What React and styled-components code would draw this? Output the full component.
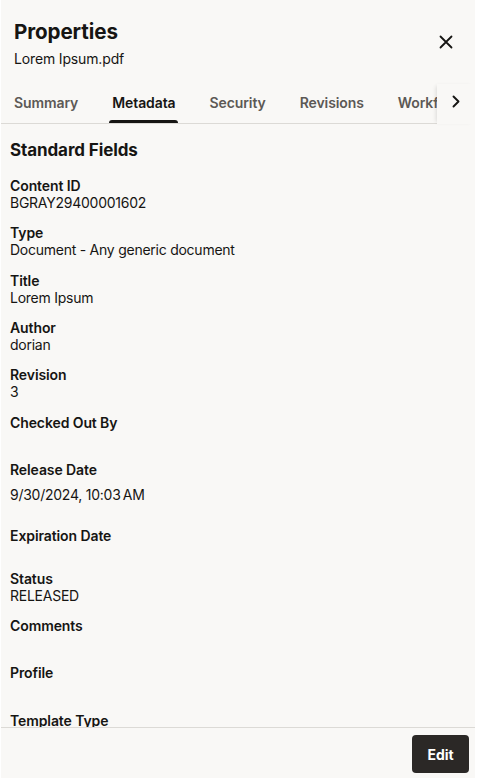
import React from "react";
import styled, { createGlobalStyle } from "styled-components";

const Global = createGlobalStyle`
  html, body { margin: 0; padding: 0; background: #ffffff; }
  body { font-family: Inter, "Noto Sans", "Liberation Sans", sans-serif; color: #161513; }
  * { box-sizing: border-box; }
`;

const Panel = styled.div`
  width: 474px;
  height: 778px;
  margin-left: 1px;
  background: #f9f8f6;
  display: flex;
  flex-direction: column;
  overflow: hidden;
`;

const Header = styled.header`
  display: flex;
  align-items: flex-start;
  justify-content: space-between;
  padding: 19px 22px 0 13px;
  height: 84px;
`;

const TitleBlock = styled.div`
  display: flex;
  flex-direction: column;
`;

const Title = styled.h1`
  margin: 0;
  font-size: 20.6px;
  line-height: 26px;
  font-weight: 700;
  letter-spacing: -0.1px;
  color: #161513;
`;

const Subtitle = styled.div`
  margin-top: 4px;
  font-size: 14px;
  line-height: 20px;
  letter-spacing: -0.15px;
  color: #161513;
`;

const CloseButton = styled.button`
  border: none;
  background: none;
  padding: 0;
  margin-top: 16px;
  width: 14px;
  height: 14px;
  display: flex;
  color: #161513;
`;

const TabRow = styled.div`
  display: flex;
  height: 40px;
`;

const TabScroller = styled.div`
  flex: 0 0 436px;
  display: flex;
  gap: 34px;
  padding-left: 13px;
  border-bottom: 1px solid #dcdad6;
  overflow: hidden;
  white-space: nowrap;
`;

const Tab = styled.div`
  position: relative;
  flex: none;
  font-size: 14px;
  font-weight: 600;
  line-height: 19px;
  letter-spacing: -0.1px;
  padding-top: 9px;
  color: ${(p) => (p.$active ? "#161513" : "#5c5955")};
  &::after {
    content: "";
    display: ${(p) => (p.$active ? "block" : "none")};
    position: absolute;
    left: -3px;
    right: -2px;
    bottom: 0;
    height: 3px;
    background: #161513;
    border-radius: 3px 3px 0 0;
  }
`;

const ChevronBtn = styled.div`
  flex: 1;
  display: flex;
  align-items: flex-start;
  padding-top: 11px;
  padding-left: 15px;
  box-shadow: -3px 0 4px -2px rgba(0, 0, 0, 0.12);
  color: #161513;
`;

const Content = styled.main`
  flex: 1;
  overflow: hidden;
  padding: 15px 10px 0 9px;
`;

const SectionTitle = styled.h2`
  margin: 0 0 16px 0;
  font-size: 17px;
  line-height: 22px;
  font-weight: 700;
  letter-spacing: -0.1px;
`;

const Field = styled.div`
  display: flex;
  flex-direction: column;
  margin-bottom: 13.35px;
`;

const Label = styled.div`
  font-size: 14px;
  font-weight: 600;
  line-height: 17px;
  letter-spacing: -0.1px;
`;

const Value = styled.div`
  font-size: 14px;
  line-height: 17px;
  letter-spacing: -0.25px;
  min-height: ${(p) => p.$min ?? 17}px;
  padding: ${(p) => (p.$date ? "8px 0 10.5px" : "0")};
`;

const Footer = styled.footer`
  flex: none;
  height: 51px;
  border-top: 1px solid #dcdad6;
  display: flex;
  justify-content: flex-end;
  align-items: flex-start;
  padding: 7px 6px 0 0;
`;

const EditButton = styled.button`
  width: 57px;
  height: 38px;
  border: none;
  border-radius: 4px;
  background: #2b2826;
  color: #ffffff;
  font-family: Inter, "Noto Sans", sans-serif;
  font-size: 14px;
  font-weight: 700;
`;

const fields = [
  { label: "Content ID", value: "BGRAY29400001602" },
  { label: "Type", value: "Document - Any generic document" },
  { label: "Title", value: "Lorem Ipsum" },
  { label: "Author", value: "dorian" },
  { label: "Revision", value: "3" },
  { label: "Checked Out By", value: "" },
  { label: "Release Date", value: "9/30/2024, 10:03\u202FAM", date: true },
  { label: "Expiration Date", value: "", min: 12.5 },
  { label: "Status", value: "RELEASED" },
  { label: "Comments", value: "" },
  { label: "Profile", value: "" },
  { label: "Template Type", value: "" },
];

const tabs = ["Summary", "Metadata", "Security", "Revisions", "Workflow"];

export default function App() {
  return (
    <>
      <Global />
      <Panel>
        <Header>
          <TitleBlock>
            <Title>Properties</Title>
            <Subtitle>Lorem Ipsum.pdf</Subtitle>
          </TitleBlock>
          <CloseButton aria-label="Close">
            <svg width="14" height="14" viewBox="0 0 14 14" fill="none">
              <path d="M1.5 1.5L12.5 12.5M12.5 1.5L1.5 12.5" stroke="currentColor" strokeWidth="1.8" strokeLinecap="round" />
            </svg>
          </CloseButton>
        </Header>
        <TabRow>
          <TabScroller>
            {tabs.map((t) => (
              <Tab key={t} $active={t === "Metadata"}>{t}</Tab>
            ))}
          </TabScroller>
          <ChevronBtn>
            <svg width="8" height="13" viewBox="0 0 8 13" fill="none">
              <path d="M1.5 1.5L6.5 6.5L1.5 11.5" stroke="currentColor" strokeWidth="1.9" strokeLinecap="round" strokeLinejoin="round" />
            </svg>
          </ChevronBtn>
        </TabRow>
        <Content>
          <SectionTitle>Standard Fields</SectionTitle>
          {fields.map((f) => (
            <Field key={f.label}>
              <Label>{f.label}</Label>
              <Value $date={f.date} $min={f.min}>{f.value}</Value>
            </Field>
          ))}
        </Content>
        <Footer>
          <EditButton>Edit</EditButton>
        </Footer>
      </Panel>
    </>
  );
}
